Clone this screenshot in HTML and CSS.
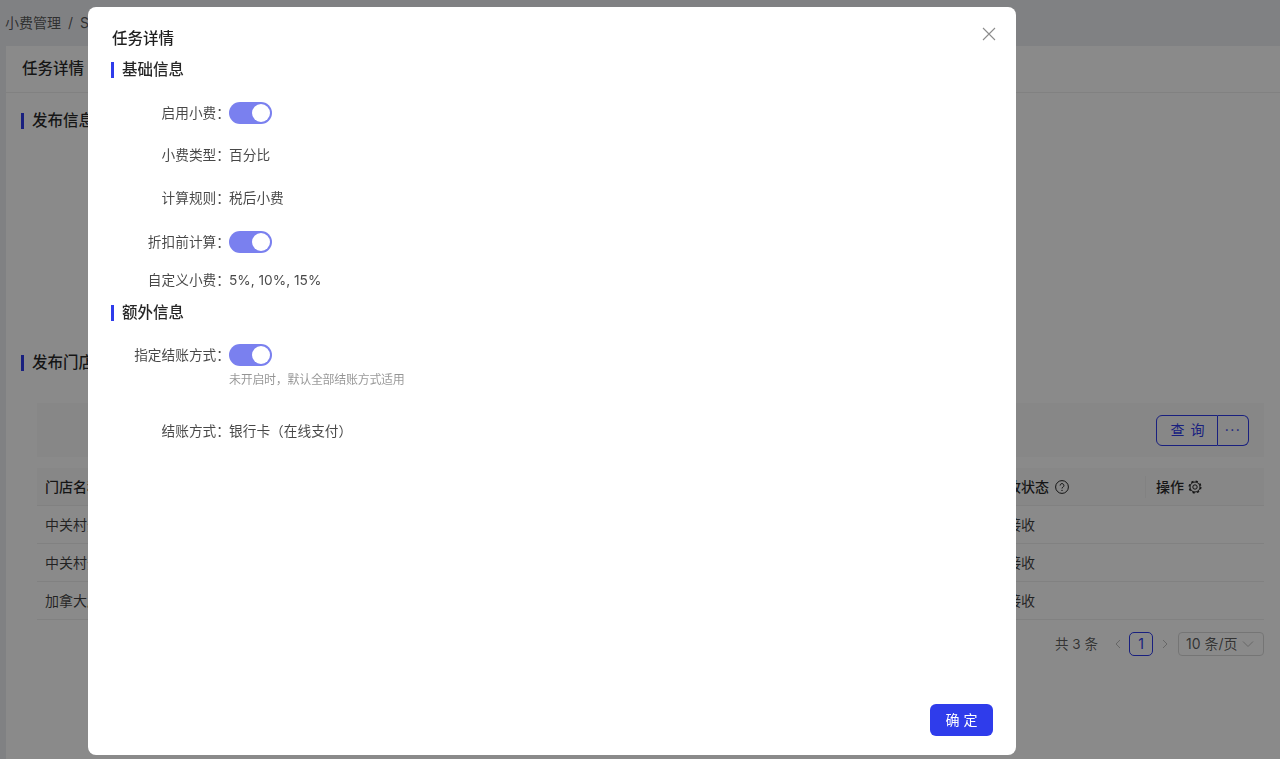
FILE: index.html
```html
<!DOCTYPE html>
<html lang="zh-CN">
<head>
<meta charset="utf-8">
<title>任务详情</title>
<link rel="stylesheet" href="styles.css">
</head>
<body>
<div class="page">
  <div class="crumbs"><span>小费管理</span><span class="sep">/</span><span>Settings</span></div>
  <main class="card">
    <div class="card-head">任务详情</div>
    <section class="pub-info">
      <h3 class="sec-title dim">发布信息</h3>
    </section>
    <section class="pub-store">
      <h3 class="sec-title dim">发布门店</h3>
      <div class="filter">
        <div class="btn-group">
          <button class="q-btn">查 询</button>
          <button class="more-btn">···</button>
        </div>
      </div>
      <div class="table">
        <div class="tr th">
          <span class="c-name">门店名称</span>
          <span class="c-status">接收状态
            <svg class="ic" viewBox="0 0 14 14" width="14" height="14"><circle cx="7" cy="7" r="6.400" fill="none" stroke="currentColor"/><path d="M5.100 5.500a1.900 1.900 0 1 1 2.900 1.600c-.7.400-1 .7-1 1.400" fill="none" stroke="currentColor"/><circle cx="7" cy="10.400" r=".7" fill="currentColor"/></svg>
          </span>
          <span class="c-op">操作
            <svg class="ic" viewBox="0 0 14 14" width="14" height="14"><circle cx="7" cy="7" r="5" fill="none" stroke="currentColor"/><circle cx="7" cy="7" r="5.900" fill="none" stroke="currentColor" stroke-width="1.200" stroke-dasharray="2.300 2.330"/><circle cx="7" cy="7" r="2.200" fill="none" stroke="currentColor"/></svg>
          </span>
        </div>
        <div class="tr"><span class="c-name">中关村分店</span><span class="c-status">已接收</span><span class="c-op"></span></div>
        <div class="tr"><span class="c-name">中关村分店</span><span class="c-status">已接收</span><span class="c-op"></span></div>
        <div class="tr"><span class="c-name">加拿大店</span><span class="c-status">已接收</span><span class="c-op"></span></div>
      </div>
      <div class="pager">
        <span class="total">共 3 条</span>
        <svg class="arrow" viewBox="0 0 10 10" width="10" height="10"><path d="M7 1L3 5l4 4" fill="none" stroke="currentColor"/></svg>
        <span class="cur">1</span>
        <svg class="arrow" viewBox="0 0 10 10" width="10" height="10"><path d="M3 1l4 4-4 4" fill="none" stroke="currentColor"/></svg>
        <span class="size">10 条/页
          <svg class="arrow" viewBox="0 0 12 12" width="12" height="12"><path d="M1 3.500l5 5 5-5" fill="none" stroke="currentColor"/></svg>
        </span>
      </div>
    </section>
  </main>
</div>

<div class="overlay"></div>

<div class="modal" role="dialog">
  <svg class="close" viewBox="0 0 14 14" width="14" height="14"><path d="M1 1l12 12M13 1L1 13" fill="none" stroke="currentColor" stroke-width="1.100"/></svg>
  <h2 class="modal-title">任务详情</h2>
  <h3 class="sec-title">基础信息</h3>
  <div class="form">
    <div class="row r-switch1"><label>启用小费：</label><span class="switch"></span></div>
    <div class="row r-type"><label>小费类型：</label><span>百分比</span></div>
    <div class="row r-rule"><label>计算规则：</label><span>税后小费</span></div>
    <div class="row r-switch2"><label>折扣前计算：</label><span class="switch"></span></div>
    <div class="row r-custom"><label>自定义小费：</label><span>5%, 10%, 15%</span></div>
  </div>
  <h3 class="sec-title">额外信息</h3>
  <div class="form">
    <div class="row r-switch3"><label>指定结账方式：</label>
      <div class="stack"><span class="switch"></span><span class="hint">未开启时，默认全部结账方式适用</span></div>
    </div>
    <div class="row r-pay"><label>结账方式：</label><span>银行卡（在线支付）</span></div>
  </div>
  <div class="modal-foot"><button class="ok">确 定</button></div>
</div>
</body>
</html>
```
FILE: styles.css
```css
* { box-sizing: border-box; }
html, body { margin: 0; height: 100%; overflow: hidden; }
body {
  font-family: Inter, "Noto Sans CJK SC", "Liberation Sans", sans-serif;
  font-size: 14px;
  line-height: 22px;
  color: rgba(0,0,0,.85);
  background: #edeff2;
}
h2, h3 { margin: 0; font-weight: 500; }
button { font: inherit; cursor: pointer; }

.page { height: 759px; padding-left: 6px; overflow: hidden; }
.crumbs { height: 46px; display: flex; align-items: center; gap: 7px; margin-left: -1px; color: rgba(0,0,0,.65); }
.card { background: #fff; height: 713px; }
.card-head { height: 47px; display: flex; align-items: center; padding-left: 16px; font-size: 15.500px; font-weight: 500; border-bottom: 1px solid #efefef; }

.sec-title { position: relative; height: 22px; line-height: 22px; padding-left: 11px; font-size: 15.500px; font-weight: 500; }
.sec-title::before { content: ""; position: absolute; left: 0; top: 3px; width: 3px; height: 16px; background: #2f3ceb; }

.pub-info { padding: 17px 0 0 15px; height: 259px; }
.pub-store { padding-left: 15px; }
.filter { margin: 29px 16px 0 16px; height: 54px; background: #fafafa; display: flex; align-items: center; justify-content: flex-end; padding-right: 15px; }
.btn-group { display: flex; height: 31px; color: #2f3ceb; }
.q-btn { width: 62px; border: 1px solid currentColor; border-radius: 6px 0 0 6px; background: none; color: inherit; padding: 0 0 0 2px; letter-spacing: 1px; }
.more-btn { width: 31px; border: 1px solid currentColor; border-left: 0; border-radius: 0 6px 6px 0; background: none; color: inherit; padding: 0; font-size: 14px; letter-spacing: 1.500px; }

.table { margin: 11px 16px 0 16px; }
.tr { height: 38px; display: flex; align-items: center; border-bottom: 1px solid #eee; color: rgba(0,0,0,.75); }
.th { height: 38px; background: #fafafa; font-weight: 500; color: rgba(0,0,0,.85); }
.c-name { padding-left: 8px; width: 956px; }
.c-status { width: 152px; display: flex; align-items: center; gap: 6px; }
.c-op { flex: 1; padding-left: 10px; display: flex; align-items: center; gap: 4px; }
.th .c-op { border-left: 1px solid #f0f0f0; height: 22px; }
.ic { flex: none; }

.pager { display: flex; align-items: center; justify-content: flex-end; height: 24px; margin: 12px 16px 0 0; color: rgba(0,0,0,.65); }
.total { margin-right: 15px; font-size: 13.500px; }
.arrow { color: #bfbfbf; flex: none; }
.cur { width: 24px; height: 24px; margin: 0 7px 0 6px; border: 1px solid #2f3ceb; border-radius: 5px; color: #2f3ceb; display: flex; align-items: center; justify-content: center; }
.size { width: 86px; height: 24px; margin-left: 8px; border: 1px solid #d9d9d9; border-radius: 4px; padding: 0 9px 0 7px; display: flex; align-items: center; justify-content: space-between; }

.overlay { position: fixed; inset: 0; background: rgba(0,0,0,.46); }

.modal {
  position: fixed; left: 88px; top: 7px; width: 928px; height: 748px;
  background: #fff; border-radius: 8px; padding: 21px 23px 0 23px;
  display: flex; flex-direction: column;
  will-change: transform;
}
.close { position: absolute; right: 20px; top: 20px; color: #8c8c8c; }
.modal-title { font-size: 15.500px; line-height: 22px; color: rgba(0,0,0,.88); margin: 0 0 9px 1px; }
.form { display: flex; flex-direction: column; }
.row { display: flex; align-items: flex-start; font-size: 13.700px; color: rgba(0,0,0,.72); }
.row label { width: 119px; text-align: right; margin-right: -1px; flex: none; white-space: nowrap; }
.r-switch1 { margin-top: 21px; }
.r-type { margin-top: 20px; }
.r-rule { margin-top: 21px; }
.r-switch2 { margin-top: 22px; }
.r-custom { margin-top: 16px; }
.r-switch3 { margin-top: 20px; }
.r-pay { margin-top: 31px; }
.form + .sec-title { margin-top: 11px; }
.switch { position: relative; display: block; width: 43px; height: 22px; border-radius: 11px; background: #7a80ef; }
.switch::after { content: ""; position: absolute; right: 2px; top: 2px; width: 18px; height: 18px; border-radius: 50%; background: #fff; }
.stack { display: flex; flex-direction: column; }
.hint { font-size: 12px; line-height: 18px; margin-top: 5px; letter-spacing: -.3px; color: rgba(0,0,0,.42); }
.modal-foot { margin-top: auto; padding-bottom: 19px; display: flex; justify-content: flex-end; }
.ok { width: 63px; height: 32px; border: 0; border-radius: 6px; background: #2f3ceb; color: #fff; padding: 0; }
```
